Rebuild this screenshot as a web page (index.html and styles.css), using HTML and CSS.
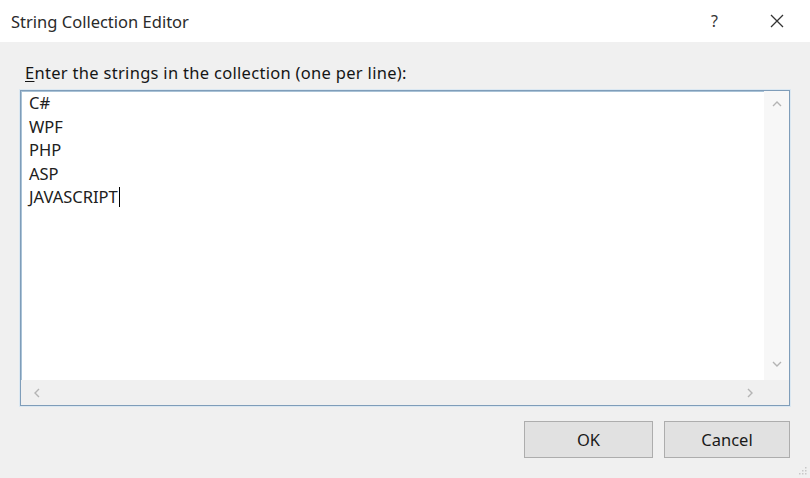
FILE: index.html
```html
<!DOCTYPE html>
<html>
<head>
<meta charset="utf-8">
<link rel="stylesheet" href="styles.css">
</head>
<body>
<div class="dialog">
  <div class="titlebar">
    <div class="title">String Collection Editor</div>
    <div class="controls">
      <span class="help">?</span>
      <svg class="close" width="14" height="14" viewBox="0 0 14 14"><path d="M1 1L13 13M13 1L1 13" stroke="#333" stroke-width="1.3" fill="none"/></svg>
    </div>
  </div>
  <div class="body">
    <div class="label"><u>E</u>nter the strings in the collection (one per line):</div>
    <div class="textbox">
      <div class="content">
        <div class="line">C#</div>
        <div class="line">WPF</div>
        <div class="line">PHP</div>
        <div class="line">ASP</div>
        <div class="line">JAVASCRIPT<span class="caret"></span></div>
      </div>
      <div class="vscroll">
        <svg width="10" height="7" viewBox="0 0 10 7"><path d="M1 6L5 2L9 6" stroke="#b4b4b4" stroke-width="1.4" fill="none"/></svg>
        <svg width="10" height="7" viewBox="0 0 10 7"><path d="M1 1L5 5L9 1" stroke="#b4b4b4" stroke-width="1.4" fill="none"/></svg>
      </div>
      <div class="hscroll">
        <svg width="7" height="10" viewBox="0 0 7 10"><path d="M6 1L2 5L6 9" stroke="#b4b4b4" stroke-width="1.4" fill="none"/></svg>
        <svg width="7" height="10" viewBox="0 0 7 10"><path d="M1 1L5 5L1 9" stroke="#b4b4b4" stroke-width="1.4" fill="none"/></svg>
      </div>
      <div class="corner"></div>
    </div>
    <div class="buttons">
      <div class="btn">OK</div>
      <div class="btn">Cancel</div>
    </div>
  </div>
  <svg class="grip" width="10" height="10" viewBox="0 0 10 10"><g fill="#c8c8c8"><rect x="8" y="2" width="1.5" height="1.5"/><rect x="5" y="5" width="1.5" height="1.5"/><rect x="8" y="5" width="1.5" height="1.5"/><rect x="2" y="8" width="1.5" height="1.5"/><rect x="5" y="8" width="1.5" height="1.5"/><rect x="8" y="8" width="1.5" height="1.5"/></g></svg>
</div>
</body>
</html>
```

FILE: styles.css
```css
* { box-sizing: border-box; }
html, body { margin: 0; padding: 0; }
body {
  width: 810px;
  height: 478px;
  overflow: hidden;
  font-family: "Noto Sans", "Open Sans", sans-serif;
  color: #1a1a1a;
  background: #f0f0f0;
}
.dialog {
  position: relative;
  width: 810px;
  height: 478px;
  display: flex;
  flex-direction: column;
}
.titlebar {
  height: 42px;
  background: #ffffff;
  display: flex;
  align-items: center;
  justify-content: space-between;
  padding: 0 26px 0 11px;
  flex: none;
}
.title {
  font-size: 16.5px;
  color: #2a2a2a;
}
.controls {
  display: flex;
  align-items: center;
  gap: 52px;
}
.help {
  font-size: 16px;
  color: #333;
}
.close { display: block; }
.body {
  flex: 1;
  padding: 21px 20px 20px 20px;
  display: flex;
  flex-direction: column;
}
.label {
  font-size: 16.5px;
  letter-spacing: 0.3px;
  line-height: 20px;
  margin-left: 5px;
  margin-bottom: 7px;
  color: #151515;
}
.label u { text-decoration-thickness: 1px; text-underline-offset: 2px; }
.textbox {
  height: 316px;
  border: 1px solid #7f9db9;
  box-shadow: inset 1px 1px 0 #a9c2d6, 0 0 0 1px #dbe8f2;
  background: #ffffff;
  display: grid;
  grid-template-columns: 1fr 25px;
  grid-template-rows: 1fr 25px;
}
.content {
  padding: 0 0 0 8px;
  font-size: 16.5px;
  line-height: 23.5px;
  color: #202020;
}
.line { height: 23.5px; display: flex; align-items: center; }
.caret {
  display: inline-block;
  width: 1.5px;
  height: 20px;
  background: #000;
  margin-left: 1px;
}
.vscroll {
  background: #f7f7f7;
  display: flex;
  flex-direction: column;
  align-items: center;
  justify-content: space-between;
  padding: 9px 0 12px 0;
}
.hscroll {
  background: #f0f0f0;
  display: flex;
  align-items: center;
  justify-content: space-between;
  padding: 0 10px 0 12px;
}
.corner { background: #f0f0f0; }
.vscroll svg, .hscroll svg { display: block; }
.buttons {
  margin-top: 15px;
  display: flex;
  justify-content: flex-end;
  gap: 11px;
}
.btn {
  width: 129px;
  height: 37px;
  background: #e1e1e1;
  border: 1px solid #adadad;
  display: flex;
  align-items: center;
  justify-content: center;
  font-size: 16.5px;
  color: #1a1a1a;
}
.btn:last-child { width: 126px; }
.grip {
  position: absolute;
  right: 3px;
  bottom: 3px;
}
```
